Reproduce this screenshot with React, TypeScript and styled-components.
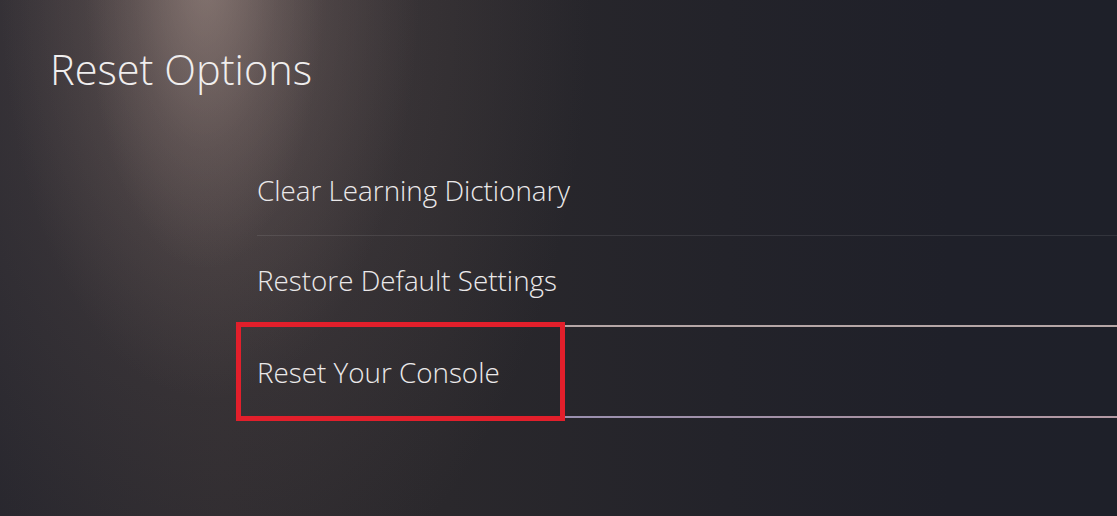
import React from "react";
import styled, { createGlobalStyle } from "styled-components";

const Global = createGlobalStyle`
  html, body { margin: 0; padding: 0; }
  body {
    width: 1117px;
    height: 516px;
    overflow: hidden;
    font-family: "Open Sans", "Noto Sans", sans-serif;
    background: #25252b;
  }
`;

const Screen = styled.div`
  position: relative;
  width: 1117px;
  height: 516px;
  overflow: hidden;
  background:
    radial-gradient(ellipse 120px 300px at 205px -30px, rgba(165, 145, 138, 0.5), rgba(150, 130, 125, 0.18) 60%, rgba(120, 105, 100, 0) 100%),
    radial-gradient(ellipse 210px 420px at 210px -20px, rgba(130, 112, 108, 0.45), rgba(110, 96, 94, 0) 100%),
    radial-gradient(ellipse 380px 640px at 210px 0px, rgba(92, 80, 80, 0.55), rgba(90, 80, 80, 0) 100%),
    linear-gradient(90deg, #28272e 0%, #2d2a2e 20%, #2a282c 40%, #23232a 65%, #1f2029 85%, #1e2029 100%);
  display: flex;
  flex-direction: column;
  padding: 41px 0 0 50px;
  box-sizing: border-box;
`;

const Title = styled.h1`
  margin: 0;
  font-family: "Open Sans", "Noto Sans", sans-serif;
  font-weight: 300;
  font-size: 41.5px;
  line-height: 56px;
  color: #f0eeee;
`;

const Menu = styled.div`
  margin: 48px 0 0 207px;
  display: flex;
  flex-direction: column;
`;

const Row = styled.div<{ $height: number; $divider?: boolean }>`
  position: relative;
  height: ${(p) => p.$height}px;
  display: flex;
  align-items: center;
  box-sizing: border-box;
  font-weight: 300;
  font-size: 27.8px;
  color: #ebe9ea;
  border-bottom: 1px solid ${(p) => (p.$divider ? "rgba(255,255,255,0.09)" : "transparent")};
`;

const FocusedRow = styled.div`
  position: relative;
  height: 93px;
  display: flex;
  align-items: center;
  box-sizing: border-box;
  font-weight: 300;
  font-size: 27.8px;
  color: #ebe9ea;
  border-top: 2px solid #b5a6a6;

  &::after {
    content: "";
    position: absolute;
    left: 0;
    right: 0;
    bottom: 0;
    height: 2px;
    background: linear-gradient(90deg, #8a8aa8 0%, #9a90b0 35%, #a892a2 75%, #b49aa4 100%);
  }
`;

const Label = styled.span<{ $shift?: number }>`
  display: block;
  line-height: 1;
  padding-top: ${(p) => p.$shift ?? 0}px;
`;

const Highlight = styled.div`
  position: absolute;
  left: -21px;
  top: -5px;
  width: 329px;
  height: 99px;
  border: 5px solid #e21f2b;
  box-sizing: border-box;
  pointer-events: none;
  z-index: 1;
`;

export default function App() {
  return (
    <>
      <Global />
      <Screen>
        <Title>Reset Options</Title>
        <Menu>
          <Row $height={91} $divider>
            <Label $shift={1}>Clear Learning Dictionary</Label>
          </Row>
          <Row $height={89}>
            <Label $shift={2}>Restore Default Settings</Label>
          </Row>
          <FocusedRow>
            <Label>Reset Your Console</Label>
            <Highlight />
          </FocusedRow>
        </Menu>
      </Screen>
    </>
  );
}
